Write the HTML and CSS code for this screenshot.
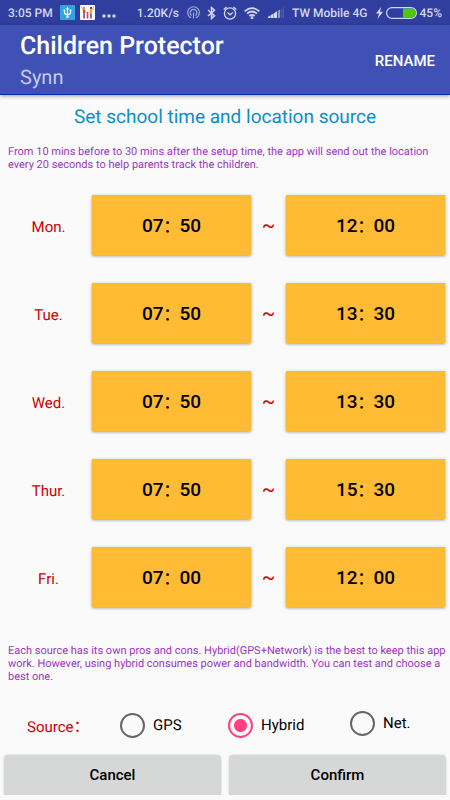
FILE: index.html
```html
<!DOCTYPE html>
<html lang="en">
<head>
    <meta charset="UTF-8">
    <meta name="viewport" content="width=device-width, initial-scale=1">
    <title>Children Protector</title>
    <link rel="stylesheet" href="styles.css">
</head>
<body>
    <div class="status">
        <span class="clock">3:05 PM</span>
        <svg class="icon" width="15" height="15" viewBox="0 0 15 15">
            <rect width="15" height="15" rx="1" fill="#35a3e0"/>
            <g fill="none" stroke="#fff" stroke-width="1.1">
                <path d="M7.5 3.5v8.5M4.5 5.2v2.3q0 2 3 2t3-2V5.2"/>
            </g>
            <path d="M7.5 2l1.5 2.3H6z" fill="#fff"/>
            <circle cx="7.5" cy="11.8" r="1.2" fill="#fff"/>
            <path d="M3.7 4.6h1.6v1.6H3.7zM9.7 4.6h1.6v1.6H9.7z" fill="#fff"/>
        </svg>
        <svg class="icon family" width="15" height="15" viewBox="0 0 15 15">
            <rect width="15" height="15" rx="1" fill="#fff"/>
            <circle cx="4" cy="3" r="1.2" fill="#d9962b"/>
            <circle cx="11" cy="3" r="1.2" fill="#6b4a3a"/>
            <path d="M3 4.500h2.200v4H3z" fill="#e8392f"/>
            <path d="M9.800 4.500h2.200v4H9.800z" fill="#f0a030"/>
            <path d="M3.300 8.500h1.500v5H3.300zM10.200 8.500h1.500v5h-1.500z" fill="#5a4a8a"/>
            <circle cx="7.5" cy="7.800" r="1.100" fill="#e8392f"/>
            <path d="M6.700 9h1.700v4.5H6.700z" fill="#d8443a"/>
            <path d="M1.3 1.5l1.700 4M13.7 1.5l-1.700 4" stroke="#e88a60" stroke-width=".8"/>
        </svg>
        <svg class="icon more" width="14" height="15" viewBox="0 0 14 15" fill="#d3d7ef">
            <circle cx="2" cy="11" r="1.7"/>
            <circle cx="7" cy="11" r="1.7"/>
            <circle cx="12" cy="11" r="1.7"/>
        </svg>
        <span class="speed">1.20K/s</span>
        <svg class="icon hotspot" width="13" height="13" viewBox="0 0 13 13" fill="none" stroke="#9da6d8" stroke-width="1.2">
            <path d="M4 11.8a5.8 5.8 0 1 1 5 0"/>
            <path d="M4.6 9.4a3.3 3.3 0 1 1 3.8 0"/>
            <path d="M6.5 6.500v6"/>
        </svg>
        <svg class="icon bluetooth" width="9" height="14" viewBox="0 0 9 14" fill="none" stroke="#d3d7ef" stroke-width="1.5">
            <path d="M1 4l6.5 5.8L4.5 12.5v-11L7.5 4.2 1 10"/>
        </svg>
        <svg class="icon alarm" width="14" height="14" viewBox="0 0 14 14" fill="none" stroke="#d3d7ef" stroke-width="1.3">
            <circle cx="7" cy="7.5" r="5.6"/>
            <path d="M4.5 6.5L7 8.8l2.8-2.3M.7 3.5L3.5 1M13.3 3.5L10.5 1"/>
        </svg>
        <svg class="icon wifi" width="16" height="12" viewBox="0 0 16 12" fill="none" stroke="#d3d7ef" stroke-width="1.7">
            <path d="M.6 4.3q7.4-6.5 14.8 0M3 6.7q5-4.4 10 0M5.3 9q2.7-2.4 5.4 0"/>
            <circle cx="8" cy="10.7" r=".6"/>
        </svg>
        <svg class="icon signal" width="16" height="11" viewBox="0 0 16 11">
            <path d="M0 11V9.800l2.600-1.500V11zM3 11V8l2.600-1.600V11zM6 11V6.200l3-1.900V11z" fill="#d3d7ef"/>
            <path d="M9.800 11V3.700l2.200-1.300V11z" fill="#8f98d0"/>
            <path d="M12.800 11V2l1-.600V11zM14.600 11V.900L16 0v11z" fill="#4f5bb0"/>
        </svg>
        <span class="carrier">TW Mobile 4G</span>
        <svg class="icon bolt" width="7" height="12" viewBox="0 0 7 12">
            <path d="M5 0L0 6.5h3L1.5 12 7 4.8H4z" fill="#d3d7ef"/>
        </svg>
        <svg class="icon battery" width="31" height="12" viewBox="0 0 31 12">
            <path d="M17 1.5h8a4.5 4.5 0 0 1 0 9h-8z" fill="#4fc80a"/>
            <rect x=".6" y=".6" width="29.8" height="10.8" rx="5.4" fill="none" stroke="#d3d7ef" stroke-width="1.2"/>
        </svg>
        <span>45%</span>
    </div>

    <header class="toolbar">
        <div>
            <h1>Children Protector</h1>
            <p class="child">Synn</p>
        </div>
        <button type="button" class="rename">RENAME</button>
    </header>

    <form class="settings">
        <h2>Set school time and location source</h2>
        <p class="note">From 10 mins before to 30 mins after the setup time, the app will send out the location every 20 seconds to help parents track the children.</p>

        <div class="days">
            <div class="day">
                <span class="name">Mon.</span>
                <button type="button" class="time">07<span class="colon">：</span>50</button>
                <span class="tilde">~</span>
                <button type="button" class="time">12<span class="colon">：</span>00</button>
            </div>
            <div class="day">
                <span class="name">Tue.</span>
                <button type="button" class="time">07<span class="colon">：</span>50</button>
                <span class="tilde">~</span>
                <button type="button" class="time">13<span class="colon">：</span>30</button>
            </div>
            <div class="day">
                <span class="name">Wed.</span>
                <button type="button" class="time">07<span class="colon">：</span>50</button>
                <span class="tilde">~</span>
                <button type="button" class="time">13<span class="colon">：</span>30</button>
            </div>
            <div class="day">
                <span class="name">Thur.</span>
                <button type="button" class="time">07<span class="colon">：</span>50</button>
                <span class="tilde">~</span>
                <button type="button" class="time">15<span class="colon">：</span>30</button>
            </div>
            <div class="day">
                <span class="name">Fri.</span>
                <button type="button" class="time">07<span class="colon">：</span>00</button>
                <span class="tilde">~</span>
                <button type="button" class="time">12<span class="colon">：</span>00</button>
            </div>
        </div>

        <p class="note">Each source has its own pros and cons. Hybrid(GPS+Network) is the best to keep this app work. However, using hybrid consumes power and bandwidth. You can test and choose a best one.</p>

        <div class="sources" role="radiogroup" aria-labelledby="source-label">
            <span class="source-label" id="source-label">Source<span class="colon">：</span></span>
            <label><input type="radio" name="source" value="gps">GPS</label>
            <label><input type="radio" name="source" value="hybrid" checked>Hybrid</label>
            <label class="net"><input type="radio" name="source" value="net">Net.</label>
        </div>

        <div class="actions">
            <button type="button">Cancel</button>
            <button type="submit">Confirm</button>
        </div>
    </form>
</body>
</html>
```
FILE: styles.css
```css
* {
    box-sizing: border-box;
}

body {
    margin: 0;
    background: #fafafa;
    color: #000;
    font-family: Roboto, "Noto Sans CJK SC", sans-serif;
    font-size: 15px;
    text-rendering: geometricPrecision;
}

h1, h2, p {
    margin: 0;
}

button {
    border: none;
    border-radius: 0;
    padding: 0;
    font-family: inherit;
    font-weight: 500;
    cursor: pointer;
}

/* status bar */
.status {
    display: flex;
    align-items: center;
    height: 25px;
    padding: 0 8px;
    background: #303f9f;
    color: #d3d7ef;
    font-size: 12px;
    font-weight: 500;
    white-space: nowrap;
}

.icon {
    flex: none;
}

.clock {
    margin-right: 7px;
}

.family {
    margin-left: 5px;
}

.more {
    margin-left: 7px;
}

.speed {
    margin-left: auto;
}

.hotspot,
.signal,
.carrier,
.bolt {
    margin-left: 8px;
}

.bluetooth,
.alarm,
.wifi {
    margin-left: 7px;
}

.battery {
    margin: 0 3px;
}

/* title bar */
.toolbar {
    display: flex;
    align-items: center;
    justify-content: space-between;
    height: 70px;
    padding: 2px 15px 0 20px;
    background: #3f51b5;
    border-bottom: 1px solid #0a2bab;
    box-shadow: 0 1px 4px rgba(0, 0, 0, 0.4);
    color: #fff;
}

h1 {
    font-size: 25px;
    font-weight: 500;
    line-height: 32px;
}

.child {
    color: #c5cbe9;
    font-size: 20px;
    line-height: 28px;
}

.rename {
    background: none;
    color: #fff;
    font-size: 15px;
}

/* settings */
h2 {
    padding-top: 10px;
    color: #0a8fc8;
    font-size: 19px;
    font-weight: 400;
    line-height: 24px;
    text-align: center;
}

.note {
    padding: 0 2px 0 8px;
    color: #9a36c4;
    font-size: 11px;
    line-height: 13px;
}

h2 + .note {
    margin-top: 16px;
}

.days {
    display: grid;
    gap: 28px;
    margin: 24px 5px 37px;
}

.day {
    display: grid;
    grid-template-columns: 87px 1fr 35px 1fr;
    align-items: center;
    text-align: center;
}

.name,
.tilde,
.source-label {
    color: #cc0000;
}

.name {
    padding-top: 4px;
}

.tilde {
    font-size: 20px;
}

.time {
    height: 60px;
    background: #ffbb33;
    box-shadow: 0 1px 3px rgba(0, 0, 0, 0.4);
    font-size: 19px;
    color: #000;
}

.colon {
    font-size: 16px;
}

.sources {
    display: grid;
    grid-template-columns: 93px 108px 122px auto;
    align-items: center;
    height: 60px;
    margin-top: 12px;
    padding-left: 27px;
}

.sources label {
    display: flex;
    align-items: center;
    gap: 8px;
}

.sources .net {
    padding-bottom: 4px;
}

input[type="radio"] {
    appearance: none;
    width: 25px;
    height: 25px;
    margin: 0;
    border: 2px solid #666;
    border-radius: 50%;
}

input[type="radio"]:checked {
    border-color: #ff4081;
    background: radial-gradient(circle, #ff4081 6px, transparent 7px);
}

.actions {
    display: grid;
    grid-template-columns: 1fr 1fr;
    gap: 10px;
    padding: 0 5px;
}

.actions button {
    height: 40px;
    border-radius: 2px;
    background: #d6d7d7;
    box-shadow: 0 1px 3px rgba(0, 0, 0, 0.4);
    color: #000;
    font-size: 15px;
}
```
